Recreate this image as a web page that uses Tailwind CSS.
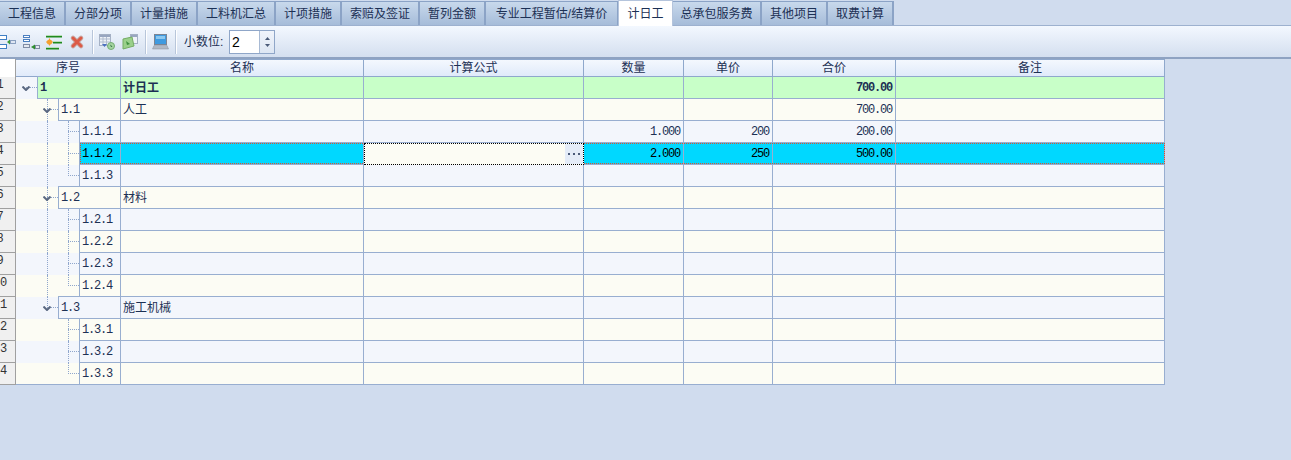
<!DOCTYPE html>
<html lang="zh-CN">
<head>
    <meta charset="UTF-8">
    <title>计日工</title>
    <script src="https://cdn.jsdelivr.net/npm/@tailwindcss/browser@4"></script>
</head>
<body class="bg-[#d0dcee] h-[460px] overflow-hidden text-[12px] leading-[16px] text-[#1c3054] font-['Liberation_Sans','Noto_Sans_CJK_SC',sans-serif]">

    <!-- tabs -->
    <div class="flex h-[26px] border-b border-[#9db1cf]">
        <div class="w-[66px] flex items-center justify-center border-t border-r-2 border-[#8ba3c6] bg-linear-to-b from-[#c8d9ec] to-[#a6bcd9] mt-px">工程信息</div>
        <div class="w-[66px] flex items-center justify-center border-t border-r-2 border-[#8ba3c6] bg-linear-to-b from-[#c8d9ec] to-[#a6bcd9] mt-px">分部分项</div>
        <div class="w-[66px] flex items-center justify-center border-t border-r-2 border-[#8ba3c6] bg-linear-to-b from-[#c8d9ec] to-[#a6bcd9] mt-px">计量措施</div>
        <div class="w-[78px] flex items-center justify-center border-t border-r-2 border-[#8ba3c6] bg-linear-to-b from-[#c8d9ec] to-[#a6bcd9] mt-px">工料机汇总</div>
        <div class="w-[66px] flex items-center justify-center border-t border-r-2 border-[#8ba3c6] bg-linear-to-b from-[#c8d9ec] to-[#a6bcd9] mt-px">计项措施</div>
        <div class="w-[78px] flex items-center justify-center border-t border-r-2 border-[#8ba3c6] bg-linear-to-b from-[#c8d9ec] to-[#a6bcd9] mt-px">索赔及签证</div>
        <div class="w-[66px] flex items-center justify-center border-t border-r-2 border-[#8ba3c6] bg-linear-to-b from-[#c8d9ec] to-[#a6bcd9] mt-px">暂列金额</div>
        <div class="w-[132px] flex items-center justify-center border-t border-r border-[#8ba3c6] bg-linear-to-b from-[#c8d9ec] to-[#a6bcd9] mt-px">专业工程暂估/结算价</div>
        <div class="w-[55px] h-[26px] flex items-center justify-center border-t border-x border-[#b4c4dc] bg-white">计日工</div>
        <div class="w-[89px] flex items-center justify-center border-t border-r-2 border-[#8ba3c6] bg-linear-to-b from-[#c8d9ec] to-[#a6bcd9] mt-px">总承包服务费</div>
        <div class="w-[66px] flex items-center justify-center border-t border-r-2 border-[#8ba3c6] bg-linear-to-b from-[#c8d9ec] to-[#a6bcd9] mt-px">其他项目</div>
        <div class="w-[66px] flex items-center justify-center border-t border-r-2 border-[#8ba3c6] bg-linear-to-b from-[#c8d9ec] to-[#a6bcd9] mt-px">取费计算</div>
    </div>

    <!-- toolbar -->
    <div class="flex items-start h-[33px] pt-[4px] border-b-2 border-[#8fa3c2] bg-linear-to-b from-[#f3f8ff] to-[#d4dfef] overflow-hidden">
        <svg class="-ml-[2px] mt-[3px] w-[18px] h-[18px] shrink-0" viewBox="0 0 18 18">
            <rect x="1.5" y="2.5" width="7" height="4" fill="#fff" stroke="#3f7fc4"/>
            <rect x="1.5" y="11.5" width="7" height="4" fill="#fff" stroke="#3f7fc4"/>
            <rect x="12.5" y="7.5" width="5" height="3" fill="#dfe6f2" stroke="#8aa0c0"/>
            <path d="M9 9l3-2.5v5z" fill="#3a9a3a"/>
        </svg>
        <svg class="ml-[6px] mt-[3px] w-[18px] h-[18px] shrink-0" viewBox="0 0 18 18">
            <rect x="1.5" y="2.5" width="6" height="2" fill="#fff" stroke="#4a7fc0"/>
            <rect x="1.5" y="6.5" width="6" height="2" fill="#fff" stroke="#4a7fc0"/>
            <rect x="1.5" y="11.5" width="6" height="3" fill="#e4e8f0" stroke="#7f8ca4"/>
            <rect x="13.5" y="12.5" width="4" height="3" fill="#e4e8f0" stroke="#7f8ca4"/>
            <path d="M9 14l4-2.5v5z" fill="#2f8f2f"/>
        </svg>
        <svg class="ml-[5px] mt-[3px] w-[18px] h-[18px] shrink-0" viewBox="0 0 18 18">
            <rect x="1" y="2" width="16" height="1" fill="#b8dcb8"/>
            <rect x="1" y="3" width="16" height="1.5" fill="#1f8a1f"/>
            <rect x="8" y="8" width="9" height="1" fill="#b8dcb8"/>
            <rect x="8" y="9" width="9" height="1.5" fill="#1f8a1f"/>
            <rect x="1" y="14" width="13" height="1" fill="#b8dcb8"/>
            <rect x="1" y="15" width="13" height="1.5" fill="#1f8a1f"/>
            <circle cx="4.5" cy="9" r="2.6" fill="#f4a030"/>
            <path d="M1 9h7M4.5 5.5v7" stroke="#f4a030"/>
        </svg>
        <svg class="ml-[5px] mt-[3px] w-[18px] h-[18px] shrink-0" viewBox="0 0 18 18">
            <path d="M5 5l8 8M13 5l-8 8" stroke="#c8aca8" stroke-width="4.6" stroke-linecap="round"/>
            <path d="M5 5l8 8M13 5l-8 8" stroke="#dc5a46" stroke-width="3" stroke-linecap="round"/>
        </svg>
        <div class="ml-[6px] w-[2px] h-[24px] shrink-0 border-l border-[#b8c6da] bg-white"></div>
        <svg class="ml-[3px] mt-[3px] w-[18px] h-[18px] shrink-0" viewBox="0 0 18 18">
            <rect x="2.5" y="1.5" width="11" height="11" fill="#eef2f8" stroke="#a4b0c4"/>
            <path d="M2.5 6h11M2.5 9h11M6 3.5v9M9.5 3.5v9" stroke="#b0bccf"/>
            <rect x="3" y="2" width="10" height="2" fill="#98a6c0"/>
            <path d="M5 11h5l-2.500 3z" fill="#4a6fc0"/>
            <circle cx="14" cy="13" r="3.500" fill="#a4d4a0" stroke="#74ac74"/>
            <path d="M13 11.500l2.500 2-1.500.5z" fill="#2f6f3f"/>
        </svg>
        <svg class="ml-[5px] mt-[3px] w-[18px] h-[18px] shrink-0" viewBox="0 0 18 18">
            <rect x="10.500" y="1.500" width="7" height="9" fill="#eef2f8" stroke="#a4b0c4"/>
            <rect x="11" y="2" width="6" height="2" fill="#98a6c0"/>
            <path d="M3 6l9-2 2 9-11 3z" fill="#9ad08a" stroke="#74ac64"/>
            <path d="M6 8l4 3-3 1z" fill="#3f8f3f"/>
        </svg>
        <div class="ml-[7px] w-[2px] h-[24px] shrink-0 border-l border-[#b8c6da] bg-white"></div>
        <svg class="ml-[4px] mt-[3px] w-[18px] h-[18px] shrink-0" viewBox="0 0 18 18">
            <rect x="3.500" y="1.500" width="12" height="10" fill="#3f9ae0" stroke="#7a8494"/>
            <rect x="5" y="3" width="9" height="3" fill="#8cc8f0"/>
            <path d="M3 12.500h13l1.500 3.500H1.500z" fill="#b0b8c4" stroke="#868f9e" stroke-width="0.5"/>
        </svg>
        <div class="ml-[6px] w-[2px] h-[24px] shrink-0 border-l border-[#b8c6da] bg-white"></div>
        <span class="ml-[7px] mt-[4px] w-[39px] shrink-0 whitespace-nowrap">小数位:</span>
        <div class="ml-[6px] flex w-[46px] h-[24px] shrink-0 border border-[#8fa6c8]">
            <span class="w-[29px] bg-white pl-[2px] text-black text-[14px] leading-[22px]">2</span>
            <div class="flex-1 flex flex-col items-center justify-center gap-[4px] border-l border-[#a8bad4] bg-linear-to-b from-[#f0f4fb] to-[#dde6f3]">
                <svg class="w-[5px] h-[3px]" viewBox="0 0 5 3"><path d="M2.5 0L5 3H0z" fill="#4a5a78"/></svg>
                <svg class="w-[5px] h-[3px]" viewBox="0 0 5 3"><path d="M0 0h5L2.5 3z" fill="#4a5a78"/></svg>
            </div>
        </div>
    </div>

    <!-- grid -->
    <div class="w-[1165px]">
        <div class="flex h-[18px] text-center leading-[16px]">
            <div class="w-[16px] shrink-0 bg-white border-r border-[#a0a0a0]"></div>
            <div class="w-[105px] shrink-0 border-y border-r border-[#8fa8cc] bg-linear-to-b from-[#f4f8fe] to-[#e0eafa]">序号</div>
            <div class="w-[243px] shrink-0 border-y border-r border-[#8fa8cc] bg-linear-to-b from-[#f4f8fe] to-[#e0eafa]">名称</div>
            <div class="w-[220px] shrink-0 border-y border-r border-[#8fa8cc] bg-linear-to-b from-[#f4f8fe] to-[#e0eafa]">计算公式</div>
            <div class="w-[100px] shrink-0 border-y border-r border-[#8fa8cc] bg-linear-to-b from-[#f4f8fe] to-[#e0eafa]">数量</div>
            <div class="w-[89px] shrink-0 border-y border-r border-[#8fa8cc] bg-linear-to-b from-[#f4f8fe] to-[#e0eafa]">单价</div>
            <div class="w-[123px] shrink-0 border-y border-r border-[#8fa8cc] bg-linear-to-b from-[#f4f8fe] to-[#e0eafa]">合价</div>
            <div class="w-[269px] shrink-0 border-y border-r border-[#8fa8cc] bg-linear-to-b from-[#f4f8fe] to-[#e0eafa]">备注</div>
        </div>
        <div id="rows"></div>
    </div>

    <script>
        const rows = [
            { seq: '1', name: '计日工', level: 0, total: '700.00' },
            { seq: '1.1', name: '人工', level: 1, total: '700.00' },
            { seq: '1.1.1', level: 2, qty: '1.000', price: '200', total: '200.00' },
            { seq: '1.1.2', level: 2, qty: '2.000', price: '250', total: '500.00', selected: true },
            { seq: '1.1.3', level: 2, last: true },
            { seq: '1.2', name: '材料', level: 1 },
            { seq: '1.2.1', level: 2 },
            { seq: '1.2.2', level: 2 },
            { seq: '1.2.3', level: 2 },
            { seq: '1.2.4', level: 2, last: true },
            { seq: '1.3', name: '施工机械', level: 1, last: true },
            { seq: '1.3.1', level: 2 },
            { seq: '1.3.2', level: 2 },
            { seq: '1.3.3', level: 2, last: true }
        ];

        const digits = "font-['Liberation_Mono',monospace] tracking-[-1.2px]";
        const line = 'border-[#8fa6cc] border-dotted absolute';
        const chevron = (pos) => `<svg class="absolute ${pos} top-[9px] w-[8px] h-[5px] z-10" viewBox="0 0 8 5"><path d="M0.5 0.5L4 4l3.5-3.5" fill="none" stroke="#5a6880" stroke-width="2"/></svg>`;
        const moreDots = '<svg class="w-[12px] h-[2px]" viewBox="0 0 12 2"><path d="M0 0h2v2H0zM5 0h2v2H5zM10 0h2v2h-2z" fill="#4a5a78"/></svg>';

        function guides(r, i) {
            let html = '';
            if (i >= 1 && i <= 9) html += `<span class="${line} border-l left-[31px] top-0 h-full"></span>`;
            if (i === 10) html += `<span class="${line} border-l left-[31px] top-0 h-[11px]"></span>`;
            if (r.level === 0) html += `<span class="${line} border-t left-[10px] top-[10px] w-[11px]"></span>` + chevron('left-[6px]');
            if (r.level === 1) html += `<span class="${line} border-t left-[31px] top-[10px] w-[11px]"></span>` + chevron('left-[27px]');
            if (r.level === 2) {
                html += `<span class="${line} border-l left-[52px] top-0 ${r.last ? 'h-[11px]' : 'h-full'}"></span>`;
                html += `<span class="${line} border-t left-[52px] top-[10px] w-[11px]"></span>`;
            }
            return html;
        }

        function numCell(width, text, bg) {
            return `<div class="${width} ${bg} ${digits} shrink-0 flex items-center justify-end pr-[3px] border-r border-b border-[#98aed0]">${text || ''}</div>`;
        }

        document.getElementById('rows').innerHTML = rows.map((r, i) => {
            const stripe = i % 2 === 0 ? 'bg-[#f3f6fc]' : 'bg-[#fcfcf4]';
            const bg = r.level === 0 ? 'bg-[#c8ffc8]' : r.selected ? 'bg-[#00d8ff]' : '';
            const weight = r.level === 0 ? 'font-bold' : '';
            const ink = r.selected ? 'text-black' : '';
            const indent = ['ml-[21px]', 'ml-[42px]', 'ml-[63px]'][r.level];
            const formula = r.selected
                ? `<div class="relative z-20 w-[220px] h-[22px] shrink-0 flex border border-dotted border-black bg-[#fcfcf4]"><span class="flex-1"></span><span class="w-[18px] flex items-center justify-center bg-[#e4ecf8]">${moreDots}</span></div>`
                : `<div class="w-[220px] shrink-0 ${bg} border-r border-b border-[#98aed0]"></div>`;
            return `<div class="relative flex h-[22px] ${stripe} ${weight} ${ink}">
                <div class="w-[16px] shrink-0 overflow-hidden border-r border-b border-[#a0a0a0] bg-[#f0f0f0] font-normal text-[#333]"><span class="block -ml-[15px] w-[30px] text-center leading-[16px] font-['Liberation_Mono',monospace]">${i + 1}</span></div>
                <div class="relative w-[105px] shrink-0 flex border-r border-[#98aed0] ${i === 13 ? 'border-b' : ''}">
                    ${guides(r, i)}
                    <div class="${indent} ${bg} flex-1 -mt-px h-[23px] flex items-center pl-[2px] border border-r-0 border-[#98aed0] ${digits}">${r.seq}</div>
                </div>
                <div class="w-[243px] shrink-0 ${bg} flex items-center pl-[2px] border-r border-b border-[#98aed0]">${r.name || ''}</div>
                ${formula}
                ${numCell('w-[100px]', r.qty, bg)}
                ${numCell('w-[89px]', r.price, bg)}
                ${numCell('w-[123px]', r.total, bg)}
                <div class="w-[269px] shrink-0 ${bg} border-r border-b border-[#98aed0]"></div>
                ${r.selected ? '<div class="absolute z-10 left-[80px] top-0 w-[1085px] h-[21px] border border-dotted border-[#e0502a]"></div>' : ''}
            </div>`;
        }).join('');
    </script>
</body>
</html>
